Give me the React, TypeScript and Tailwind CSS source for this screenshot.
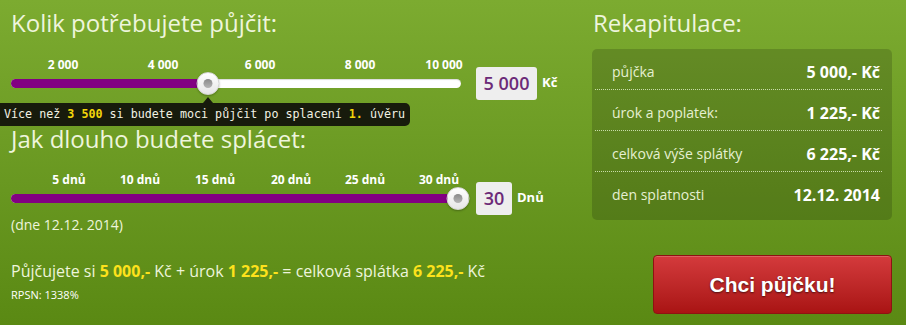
import React from "react";

const amountTicks = [
  { label: "2 000", x: 52 },
  { label: "4 000", x: 152 },
  { label: "6 000", x: 249 },
  { label: "8 000", x: 349 },
  { label: "10 000", x: 433 },
];

const dayTicks = [
  { label: "5 dnů", x: 58 },
  { label: "10 dnů", x: 129 },
  { label: "15 dnů", x: 204 },
  { label: "20 dnů", x: 280 },
  { label: "25 dnů", x: 354 },
  { label: "30 dnů", x: 428 },
];

const recap = [
  { label: "půjčka", value: "5 000,- Kč" },
  { label: "úrok a poplatek:", value: "1 225,- Kč" },
  { label: "celková výše splátky", value: "6 225,- Kč" },
  { label: "den splatnosti", value: "12.12. 2014" },
];

function Slider({
  ticks,
  thumb,
  value,
  unit,
  boxWidth,
  children,
}: {
  ticks: { label: string; x: number }[];
  thumb: number;
  value: string;
  unit: string;
  boxWidth: string;
  children?: React.ReactNode;
}) {
  return (
    <div className="flex items-start">
      <div className="relative w-[450px] h-[42px]">
        {ticks.map((t) => (
          <span
            key={t.label}
            className="absolute top-[1px] -translate-x-1/2 text-[12px] leading-[16px] font-bold text-white whitespace-nowrap"
            style={{ left: t.x }}
          >
            {t.label}
          </span>
        ))}
        {/* track */}
        <div className="absolute top-[23px] left-0 w-[450px] h-[9px] rounded-full bg-white overflow-hidden shadow-[inset_0_1px_1px_rgba(0,0,0,0.15)]">
          <div className="h-full bg-[#820082]" style={{ width: thumb }} />
        </div>
        {/* thumb */}
        <div
          className="absolute top-[16px] -translate-x-1/2 w-[23px] h-[23px] rounded-full bg-gradient-to-b from-white to-[#e6e6e6] border border-[#d4d4d4] flex items-center justify-center shadow-[0_1px_2px_rgba(0,0,0,0.25)]"
          style={{ left: thumb }}
        >
          <div className="w-[9px] h-[9px] rounded-full bg-gradient-to-b from-[#8a8a8a] to-[#b5b5b5]" />
        </div>
        {children}
      </div>
      <div
        className={`mt-[11px] ml-[15px] ${boxWidth} h-[33px] rounded-[3px] bg-[#eeeeee] flex items-center justify-center text-[18px] font-semibold text-[#6c2a78]`}
      >
        {value}
      </div>
      <span className="mt-[17px] ml-[5px] text-[13px] leading-[18px] font-bold text-white">{unit}</span>
    </div>
  );
}

export default function App() {
  const y = "font-bold text-[#fde21c]";
  return (
    <div className="w-[906px] h-[325px] flex bg-gradient-to-b from-[#7cab30] to-[#5a8913] font-['Open_Sans',sans-serif] text-[#eef5dc] overflow-hidden">
      {/* Left: calculator */}
      <div className="w-[592px] shrink-0 pl-[11px] pt-[8px] flex flex-col">
        <h2 className="text-[24px] leading-[30px] h-[30px]">Kolik potřebujete půjčit:</h2>

        <div className="mt-[18px]">
          <Slider ticks={amountTicks} thumb={197} value="5 000" unit="Kč" boxWidth="w-[61px]">
            {/* tooltip */}
            <div className="absolute top-[41px] left-[192px] w-0 h-0 border-x-[5px] border-x-transparent border-b-[6px] border-b-[#171b0c]" />
            <div className="absolute top-[47px] -left-[11px] w-[410px] h-[23px] pl-[4px] rounded-r-[5px] bg-[#171b0c] flex items-center font-['DejaVu_Sans_Mono',monospace] text-[11.7px] text-[#f2f2e4] whitespace-nowrap">
              Více než&nbsp;<span className="font-bold text-[#f2d40a]">3 500</span>&nbsp;si budete moci půjčit po splacení&nbsp;
              <span className="font-bold text-[#f2d40a]">1.</span>&nbsp;úvěru
            </div>
          </Slider>
        </div>

        <h2 className="mt-[24px] text-[24px] leading-[30px] h-[30px]">Jak dlouho budete splácet:</h2>

        <div className="mt-[17px]">
          <Slider ticks={dayTicks} thumb={447} value="30" unit="Dnů" boxWidth="w-[36px]" />
        </div>

        <p className="mt-[1px] text-[14px] leading-[18px]">(dne 12.12. 2014)</p>

        <p className="mt-[26px] text-[16px] leading-[22px] whitespace-nowrap">
          Půjčujete si <span className={y}>5 000,-</span> Kč + úrok <span className={y}>1 225,-</span> = celková splátka{" "}
          <span className={y}>6 225,-</span> Kč
        </p>
        <p className="mt-[6px] text-[11px] leading-[14px] text-white">RPSN: 1338%</p>
      </div>

      {/* Right: summary */}
      <div className="w-[300px] shrink-0 pt-[8px] flex flex-col">
        <h2 className="text-[24px] leading-[30px] h-[30px] pl-[1px]">Rekapitulace:</h2>

        <div className="mt-[11px] w-[300px] h-[171px] rounded-[5px] bg-black/[0.16] pl-[3px] pr-[10px]">
          {recap.map((r, i) => (
            <div
              key={r.label}
              className={`flex justify-between items-center pt-[13px] pl-[17px] pr-[2px] ${
                i < recap.length - 1 ? "h-[41px] border-b border-dotted border-[#c8dca8]" : "h-[44px]"
              }`}
            >
              <span className="text-[14px] leading-[20px] text-[#e6f0d2] self-start">{r.label}</span>
              <span className="text-[16px] leading-[20px] font-bold text-white self-start">{r.value}</span>
            </div>
          ))}
        </div>

        <button className="mt-[35px] ml-[61px] w-[239px] h-[59px] rounded-[4px] border border-[#8e1212] bg-gradient-to-b from-[#d43a3c] to-[#a91313] shadow-[inset_0_1px_0_rgba(255,255,255,0.2)] flex items-center justify-center font-['Liberation_Sans',Arial,sans-serif] font-bold text-[21px] text-white [text-shadow:0_1px_2px_rgba(0,0,0,0.6)]">
          Chci půjčku!
        </button>
      </div>
    </div>
  );
}
